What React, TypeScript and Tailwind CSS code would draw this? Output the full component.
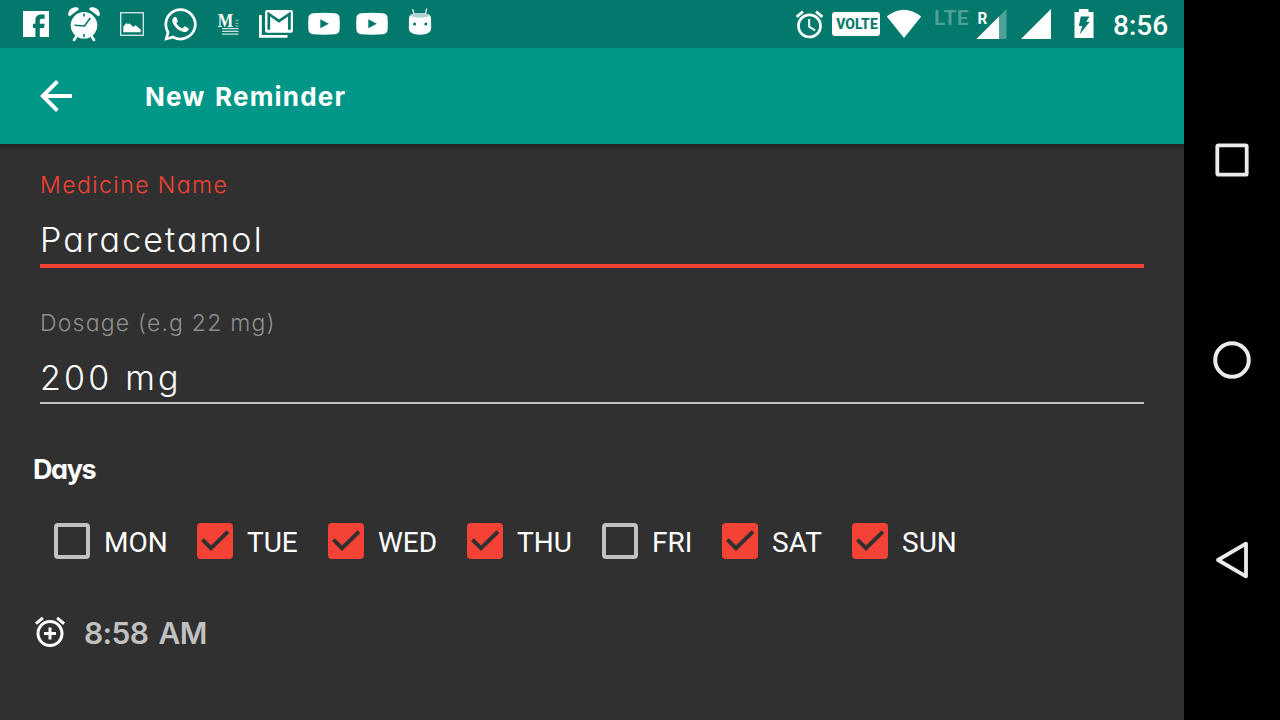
import React from "react";
import { MdAccessAlarm, MdAddAlarm, MdArrowBack } from "react-icons/md";
import { FaWhatsapp } from "react-icons/fa";

const ROUND = "font-['Inter',sans-serif] [font-feature-settings:'cv11','ss03'] whitespace-nowrap";

function FacebookIcon() {
  return (
    <svg width="48" height="48" viewBox="0 0 48 48" fill="#fff">
      <rect x="11" y="11" width="26" height="26" />
      <path
        d="M27.8 37.5V28H32L32.7 23.8H27.8V20.7C27.8 19.3 28.5 18.7 30.1 18.7H32.6V14.6C32 14.5 30.5 14.4 29.4 14.4C25.6 14.4 23.4 16.4 23.4 20V23.8H21V28H23.4V37.5Z"
        fill="#02796b"
      />
    </svg>
  );
}

function AlarmClockIcon() {
  return (
    <svg width="48" height="48" viewBox="0 0 48 48" fill="#fff">
      <path d="M8.3 15.4C7.3 10.7 12.4 5.8 18 7.8L19 9.3L9.8 16.2Z" />
      <path d="M39.7 15.4C40.7 10.7 35.6 5.8 30 7.8L29 9.3L38.2 16.2Z" />
      <circle cx="24" cy="25.3" r="13.3" />
      <path d="M16.5 36L14 40M31.5 36L34 40" stroke="#fff" strokeWidth="2.6" strokeLinecap="round" />
      <path
        d="M14.5 25.3L24.5 26L30.3 18M24 13.5V16.4M24 34V37"
        stroke="#02796b"
        strokeWidth="1.6"
        fill="none"
      />
    </svg>
  );
}

function PictureIcon() {
  return (
    <svg width="48" height="48" viewBox="0 0 48 48">
      <rect x="12.7" y="12.7" width="22.6" height="22.6" fill="none" stroke="#fff" strokeOpacity=".85" strokeWidth="1.3" />
      <path d="M15.3 32.3V26.5L18.5 23L20 24.3L21.5 23.2L25 27L27.5 25.3L32.7 29.5V32.3Z" fill="#fff" />
    </svg>
  );
}

function MediumIcon() {
  return (
    <svg width="48" height="48" viewBox="0 0 48 48">
      <text x="13.8" y="26.8" fontFamily="Liberation Serif, serif" fontWeight="700" fontSize="19.5" textLength="15.5" lengthAdjust="spacingAndGlyphs" fill="#fff">
        M
      </text>
      <path d="M31.5 20.3H34.5M31.5 23.2H34.5M31.5 26H34.5" stroke="#fff" strokeOpacity=".65" strokeWidth="1" />
      <path d="M18 28.7H34.5M18 31.4H34.5M18 34.2H34.5" stroke="#fff" strokeOpacity=".8" strokeWidth="1.2" />
    </svg>
  );
}

function GmailStackIcon() {
  return (
    <svg width="48" height="48" viewBox="0 0 48 48">
      <path d="M8.4 15V36.4H35.5" stroke="#fff" strokeWidth="2.8" fill="none" />
      <rect x="13" y="10" width="28" height="22.7" rx="2.2" fill="#fff" />
      <path d="M16.8 29.8V14L27 21L37.4 14V29.8" stroke="#02796b" strokeWidth="2.7" fill="none" />
      <path d="M16 10.6L27 18.2L38 10.6Z" fill="#fff" />
    </svg>
  );
}

function YoutubeIcon() {
  return (
    <svg width="48" height="48" viewBox="0 0 48 48">
      <path
        d="M13 13.2Q24 12.4 35 13.2Q39.3 13.6 39.6 18Q40 24 39.6 29.5Q39.3 33.8 35 34.3Q24 35.2 13 34.3Q8.7 33.8 8.4 29.5Q8 24 8.4 18Q8.7 13.6 13 13.2Z"
        fill="#fff"
      />
      <path d="M20.3 19.3V28.2L28.8 23.8Z" fill="#02796b" />
    </svg>
  );
}

function AndroidHeadIcon() {
  return (
    <svg width="48" height="48" viewBox="0 0 48 48">
      <path d="M18.2 14.5L16.6 9.3M29.2 14.5L30.7 8.7" stroke="#fff" strokeOpacity=".9" strokeWidth="1.3" />
      <path d="M13 18Q13 13 24 13Q35 13 35 18L35.2 28Q35.2 34.8 24 34.8Q12.8 34.8 12.8 28Z" fill="#fff" />
      <ellipse cx="24" cy="15.3" rx="9.3" ry="2.4" fill="#aed4cf" />
      <circle cx="18.6" cy="24" r="1.5" fill="#02796b" />
      <circle cx="29.8" cy="24" r="1.5" fill="#02796b" />
    </svg>
  );
}

function StatusBar() {
  return (
    <div className="flex h-12 items-center overflow-hidden bg-[#02796b] pl-3 text-white">
      <FacebookIcon />
      <AlarmClockIcon />
      <PictureIcon />
      <div className="flex w-12 justify-center">
        <FaWhatsapp className="size-[37px]" />
      </div>
      <MediumIcon />
      <GmailStackIcon />
      <YoutubeIcon />
      <YoutubeIcon />
      <AndroidHeadIcon />
      <div className="ml-[348px] flex w-[34px] justify-center">
        <MdAccessAlarm className="size-[33px] shrink-0" />
      </div>
      <div className="ml-[6px] flex h-6 w-[48px] items-center justify-center rounded-[3px] bg-white">
        <span className="pl-[2px] font-['Roboto',sans-serif] text-[14px] leading-6 font-extrabold text-[#02796b]">VOLTE</span>
      </div>
      <svg width="36" height="48" viewBox="0 0 36 48" className="ml-[6px]">
        <path d="M.8 16.6Q17.8 3 35.2 16.6L18 38Z" fill="#fff" />
      </svg>
      <span className="-mt-3 ml-[12px] w-[42px] font-['Roboto',sans-serif] text-[21px] leading-6 font-semibold tracking-[0.5px] text-[#4fa197]">
        LTE
      </span>
      <svg width="32" height="48" viewBox="0 0 32 48">
        <path d="M30.5 9V39H.5Z" fill="#4fa197" />
        <path d="M23 16.5V39H.5Z" fill="#fff" />
        <text x="1.5" y="23.5" fontFamily="Roboto, sans-serif" fontWeight="700" fontSize="16.5" textLength="9.8" lengthAdjust="spacingAndGlyphs" fill="#fff">
          R
        </text>
      </svg>
      <svg width="32" height="48" viewBox="0 0 32 48" className="ml-[12px]">
        <path d="M31 9V39H1Z" fill="#fff" />
      </svg>
      <svg width="20" height="48" viewBox="0 0 20 48" className="ml-[22px]">
        <path d="M.5 12H5V9H14.5V12H19.5V38H.5Z" fill="#fff" />
        <path d="M6.8 16.5H15.4L12.2 21.8H15.8L5.5 34.5L8.3 26H4.8Z" fill="#02796b" />
      </svg>
      <span className="ml-[19px] pt-1 font-['Roboto',sans-serif] text-[28px] leading-9 font-medium">8:56</span>
    </div>
  );
}

const DAYS = [
  { name: "MON", on: false, width: "w-[143px]" },
  { name: "TUE", on: true, width: "w-[131px]" },
  { name: "WED", on: true, width: "w-[139px]" },
  { name: "THU", on: true, width: "w-[135px]" },
  { name: "FRI", on: false, width: "w-[120px]" },
  { name: "SAT", on: true, width: "w-[130px]" },
  { name: "SUN", on: true, width: "w-[130px]" },
];

function DayCheckbox({ name, on, width }: { name: string; on: boolean; width: string }) {
  return (
    <div className={`flex items-center ${width}`}>
      <svg width="36" height="36" viewBox="0 0 36 36" className="shrink-0">
        {on ? (
          <>
            <rect width="36" height="36" rx="4" fill="#f44336" />
            <path d="M5.4 16.6L14 25.2L31 8.6" stroke="#303030" strokeWidth="3.9" fill="none" />
          </>
        ) : (
          <rect x="2" y="2" width="32" height="32" rx="2" fill="none" stroke="#c1c1c1" strokeWidth="4" />
        )}
      </svg>
      <span className="ml-[14px] pt-[3px] font-['Roboto',sans-serif] text-[28px] leading-9 text-white">{name}</span>
    </div>
  );
}

function NavigationBar() {
  return (
    <nav className="flex w-24 flex-col items-center justify-around bg-black py-[60px]">
      <svg width="48" height="48" viewBox="0 0 48 48" fill="none" stroke="#ececec" strokeWidth="3.8">
        <rect x="9.3" y="9.3" width="29.4" height="29.4" rx="1" />
      </svg>
      <svg width="48" height="48" viewBox="0 0 48 48" fill="none" stroke="#ececec" strokeWidth="4">
        <circle cx="24" cy="24" r="16.8" />
      </svg>
      <svg width="48" height="48" viewBox="0 0 48 48" fill="none" stroke="#ececec" strokeWidth="3.8" strokeLinejoin="round">
        <path d="M10 24L38 7.7V40.3Z" />
      </svg>
    </nav>
  );
}

export default function App() {
  return (
    <div className="flex h-[720px] w-[1280px] overflow-hidden bg-[#303030]">
      <div className="flex flex-1 flex-col">
        <StatusBar />
        <header className="flex h-24 items-center bg-[#009788] pl-8 text-white">
          <MdArrowBack className="size-12" />
          <h1 className={`${ROUND} ml-[65px] pt-px text-[26px] leading-8 font-bold tracking-[1.2px] [word-spacing:2px]`}>New Reminder</h1>
        </header>
        <div className="h-[7px] bg-gradient-to-b from-[#222222] to-[#303030]" />
        <main className="flex flex-col px-10 pt-[22px]">
          <label className={`${ROUND} text-[23px] leading-6 font-[270] tracking-[1.45px] text-[#f44336]`}>Medicine Name</label>
          <div className={`${ROUND} mt-[23px] h-[44px] text-[34px] leading-10 font-[270] tracking-[2.1px] text-white`}>Paracetamol</div>
          <div className="h-1 bg-[#f44336]" />
          <label className={`${ROUND} mt-[43px] text-[23px] leading-6 font-[270] tracking-[1.2px] text-[#8e8e8e]`}>Dosage (e.g 22 mg)</label>
          <div className={`${ROUND} mt-[23px] h-[44px] text-[34px] leading-10 font-[270] tracking-[3.2px] text-white`}>200 mg</div>
          <div className="h-0.5 bg-[#c1c1c1]" />
          <h2 className={`${ROUND} mt-[50px] -ml-[7px] text-[27px] leading-8 font-bold tracking-[-1.4px] text-white`}>Days</h2>
          <div className="mt-[37px] ml-[14px] flex h-9 items-center">
            {DAYS.map((day) => (
              <DayCheckbox key={day.name} {...day} />
            ))}
          </div>
          <div className="mt-[55px] -ml-2 flex h-9 items-center">
            <MdAddAlarm className="size-9 text-white" />
            <span className={`${ROUND} ml-[16px] pt-0.5 text-[30px] leading-9 font-semibold tracking-[-0.6px] [word-spacing:3px] text-[#c1c1c1]`}>8:58 AM</span>
          </div>
        </main>
      </div>
      <NavigationBar />
    </div>
  );
}
